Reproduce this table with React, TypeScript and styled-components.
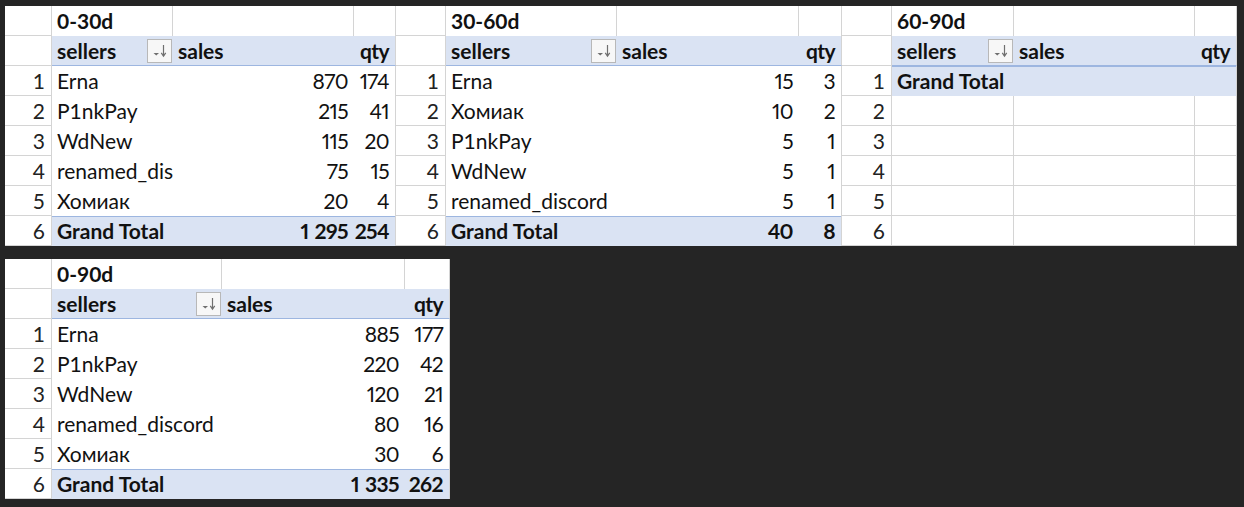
import React from "react";
import styled, { createGlobalStyle, css } from "styled-components";

const GRID = "#d4d4d4";
const BLUE_BG = "#dae3f3";
const BLUE_LINE = "#9db6e0";

const Global = createGlobalStyle`
  html, body { margin: 0; padding: 0; background: #252525; }
  body { font-family: Lato, "Noto Sans", sans-serif; color: #111; }
`;

const Page = styled.div`
  width: 1244px;
  height: 507px;
  box-sizing: border-box;
  padding: 6px 0 0 5px;
  display: flex;
  flex-direction: column;
  gap: 13px;
  background: #252525;
`;

const TopRow = styled.div`
  display: flex;
  align-items: flex-start;
`;

const Panel = styled.div<{ $cols: string }>`
  display: grid;
  grid-template-columns: ${(p) => p.$cols};
  grid-auto-rows: 30px;
  background: #fff;
  font-size: 21px;
`;

type Kind = "title" | "header" | "data" | "total" | "empty";

const Cell = styled.div<{ $kind: Kind; $right?: boolean; $last?: boolean; $topLine?: boolean }>`
  box-sizing: border-box;
  display: flex;
  align-items: flex-start;
  justify-content: ${(p) => (p.$right ? "flex-end" : "flex-start")};
  line-height: 30px;
  height: 30px;
  min-width: 0;
  padding: 0 ${(p) => (p.$right ? "6px" : "5px")} 0 ${(p) => (p.$right ? "0" : "5px")};
  white-space: nowrap;
  ${(p) =>
    p.$right &&
    css`
      font-variant-numeric: proportional-nums;
      letter-spacing: -0.6px;
    `}
  ${(p) =>
    p.$last &&
    css`
      border-right: 1px solid ${GRID};
    `}
  ${(p) =>
    p.$kind === "title" &&
    css`
      font-weight: 700;
      border-right: 1px solid ${GRID};
    `}
  ${(p) =>
    p.$kind === "header" &&
    css`
      font-weight: 700;
      background: ${BLUE_BG};
      border-bottom: 1px solid ${BLUE_LINE};
    `}
  ${(p) =>
    p.$kind === "total" &&
    css`
      font-weight: 700;
      background: ${BLUE_BG};
    `}
  ${(p) =>
    p.$topLine &&
    css`
      box-shadow: inset 0 1px 0 ${BLUE_LINE};
    `}
  ${(p) =>
    p.$kind === "empty" &&
    css`
      border-right: 1px solid ${GRID};
      border-bottom: 1px solid ${GRID};
    `}
`;

const Thousands = styled.span`
  display: inline-block;
  width: 6px;
`;

const HeaderSellers = styled(Cell)`
  align-items: center;
  justify-content: space-between;
  padding-right: 1px;
`;

const HeaderLabel = styled.span`
  line-height: 30px;
  align-self: flex-start;
`;

const FilterButton = styled.div`
  width: 25px;
  height: 24px;
  box-sizing: border-box;
  border: 1px solid #b8b8b8;
  background: #f7f7f7;
  display: flex;
  align-items: center;
  justify-content: center;
`;

const RowNum = styled.div`
  box-sizing: border-box;
  height: 30px;
  line-height: 30px;
  font-size: 21px;
  text-align: right;
  padding-right: 6px;
  border-right: 1px solid ${GRID};
  border-bottom: 1px solid ${GRID};
  color: #222;
`;

const FilterIcon = () => (
  <svg width="19" height="16" viewBox="0 0 19 16">
    <path d="M3.5 10 L9 10 L6.25 12.5 Z" fill="#6f6f6f" />
    <path d="M13.5 2 L13.5 12.5" stroke="#6f6f6f" strokeWidth="1.2" />
    <path d="M11.3 9.8 L13.5 13.2 L15.7 9.8" stroke="#6f6f6f" strokeWidth="1.2" fill="none" />
  </svg>
);

const fmt = (v: string) => {
  const parts = v.split(" ");
  if (parts.length === 1) return v;
  return (
    <>
      {parts[0]}
      <Thousands />
      {parts[1]}
    </>
  );
};

type Row = [string, string, string];

interface PivotProps {
  title: string;
  cols: [number, number, number, number];
  rows: Row[];
  total: [string, string] | null;
}

const Pivot: React.FC<PivotProps> = ({ title, cols, rows, total }) => {
  const template = cols.map((c) => `${c}px`).join(" ");
  const lines: React.ReactNode[] = [];
  lines.push(<RowNum key="t0" />);
  lines.push(
    <Cell key="t1" $kind="title">
      {title}
    </Cell>
  );
  lines.push(<Cell key="t2" $kind="title" />);
  lines.push(<Cell key="t3" $kind="title" />);
  lines.push(<RowNum key="h0" />);
  lines.push(
    <HeaderSellers key="h1" $kind="header">
      <HeaderLabel>sellers</HeaderLabel>
      <FilterButton>
        <FilterIcon />
      </FilterButton>
    </HeaderSellers>
  );
  lines.push(
    <Cell key="h2" $kind="header">
      sales
    </Cell>
  );
  lines.push(
    <Cell key="h3" $kind="header" $right $last>
      qty
    </Cell>
  );
  let n = 1;
  rows.forEach((r, i) => {
    lines.push(<RowNum key={`r${i}0`}>{n}</RowNum>);
    lines.push(
      <Cell key={`r${i}1`} $kind="data">
        {r[0]}
      </Cell>
    );
    lines.push(
      <Cell key={`r${i}2`} $kind="data" $right>
        {fmt(r[1])}
      </Cell>
    );
    lines.push(
      <Cell key={`r${i}3`} $kind="data" $right $last>
        {fmt(r[2])}
      </Cell>
    );
    n++;
  });
  lines.push(<RowNum key="g0">{n}</RowNum>);
  lines.push(
    <Cell key="g1" $kind="total" $topLine>
      Grand Total
    </Cell>
  );
  lines.push(
    <Cell key="g2" $kind="total" $right $topLine>
      {total ? fmt(total[0]) : ""}
    </Cell>
  );
  lines.push(
    <Cell key="g3" $kind="total" $right $last $topLine>
      {total ? fmt(total[1]) : ""}
    </Cell>
  );
  n++;
  while (n <= 6) {
    lines.push(<RowNum key={`e${n}0`}>{n}</RowNum>);
    lines.push(<Cell key={`e${n}1`} $kind="empty" />);
    lines.push(<Cell key={`e${n}2`} $kind="empty" />);
    lines.push(<Cell key={`e${n}3`} $kind="empty" />);
    n++;
  }
  return <Panel $cols={template}>{lines}</Panel>;
};

export default function App() {
  return (
    <>
      <Global />
      <Page>
        <TopRow>
          <Pivot
            title="0-30d"
            cols={[47, 121, 181, 42]}
            rows={[
              ["Erna", "870", "174"],
              ["P1nkPay", "215", "41"],
              ["WdNew", "115", "20"],
              ["renamed_dis", "75", "15"],
              ["Хомиак", "20", "4"],
            ]}
            total={["1 295", "254"]}
          />
          <Pivot
            title="30-60d"
            cols={[50, 171, 182, 43]}
            rows={[
              ["Erna", "15", "3"],
              ["Хомиак", "10", "2"],
              ["P1nkPay", "5", "1"],
              ["WdNew", "5", "1"],
              ["renamed_discord", "5", "1"],
            ]}
            total={["40", "8"]}
          />
          <Pivot title="60-90d" cols={[50, 122, 181, 42]} rows={[]} total={null} />
        </TopRow>
        <TopRow>
          <Pivot
            title="0-90d"
            cols={[47, 170, 183, 45]}
            rows={[
              ["Erna", "885", "177"],
              ["P1nkPay", "220", "42"],
              ["WdNew", "120", "21"],
              ["renamed_discord", "80", "16"],
              ["Хомиак", "30", "6"],
            ]}
            total={["1 335", "262"]}
          />
        </TopRow>
      </Page>
    </>
  );
}
